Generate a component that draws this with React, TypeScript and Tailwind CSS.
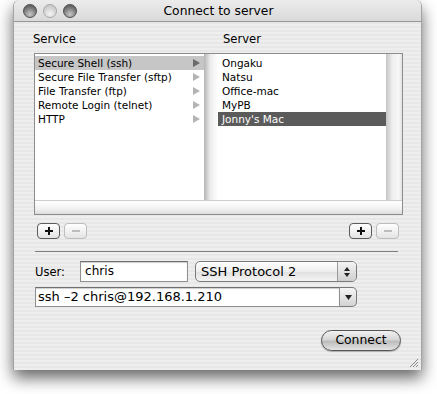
import React from 'react';

const services = [
  'Secure Shell (ssh)',
  'Secure File Transfer (sftp)',
  'File Transfer (ftp)',
  'Remote Login (telnet)',
  'HTTP',
];

const servers = ['Ongaku', 'Natsu', 'Office-mac', 'MyPB', "Jonny's Mac"];

const Arrow = ({ dark }: { dark?: boolean }) => (
  <svg width="7" height="8" viewBox="0 0 7 8">
    <path d="M0 0 L7 4 L0 8 Z" fill={dark ? '#6a6a6a' : '#b4b4b4'} />
  </svg>
);

const Light = ({ dim }: { dim?: boolean }) => (
  <div
    className={`h-[14px] w-[14px] rounded-full border ${
      dim
        ? 'border-[#a9a9a9] bg-[radial-gradient(circle_at_50%_75%,#f4f4f4,#c9c9c9_75%)]'
        : 'border-[#4e4e4e] bg-[radial-gradient(circle_at_50%_78%,#c8c8c8,#6a6a6a_70%,#555_100%)]'
    }`}
  />
);

const SmallButton = ({ kind, enabled }: { kind: 'plus' | 'minus'; enabled?: boolean }) => (
  <div
    className={`flex h-[16px] w-[23px] items-center justify-center rounded-[4px] border bg-[linear-gradient(to_bottom,#ffffff,#e4e4e4)] ${
      enabled ? 'border-[#5c5c5c]' : 'border-[#bdbdbd]'
    }`}
  >
    <svg width="10" height="10" viewBox="0 0 10 10">
      <path d="M1 5 H9" stroke={enabled ? '#111' : '#bcbcbc'} strokeWidth="2" />
      {kind === 'plus' && <path d="M5 1 V9" stroke="#111" strokeWidth="2" />}
    </svg>
  </div>
);

export default function App() {
  return (
    <div className="h-[394px] w-[437px] overflow-hidden bg-white pl-[13px] font-['DejaVu_Sans',sans-serif] text-black">
      {/* Window */}
      <div className="relative h-[370px] w-[409px] rounded-t-[6px] border-x border-[#a3a3a3] bg-[repeating-linear-gradient(180deg,#eeeeee_0px,#eeeeee_2px,#e7e7e7_2px,#e7e7e7_4px)] shadow-[0_8px_16px_rgba(0,0,0,0.6)]">
        {/* Title bar */}
        <div className="relative flex h-[22px] items-center gap-[6px] rounded-t-[6px] border-b border-[#979797] bg-[linear-gradient(to_bottom,#ececec,#d9d9d9)] pl-[9px]">
          <Light />
          <Light dim />
          <Light />
          <div className="absolute inset-0 flex items-center justify-center pl-[2px] text-[12.3px] leading-[22px]">
            Connect to server
          </div>
        </div>

        <div className="pl-[19px] pr-[19px]">
          {/* Column headers */}
          <div className="mt-[10px] flex h-[14px] text-[11.6px] leading-[14px]">
            <div className="w-[190px]">Service</div>
            <div>Server</div>
          </div>

          {/* Browser */}
          <div className="ml-[1px] mt-[7px] h-[162px] w-[369px] border border-[#8c8c8c] bg-white">
            <div className="flex h-[146px]">
              <div className="w-[169px] pt-[2px] text-[10.5px] leading-[14px]">
                {services.map((s, i) => (
                  <div
                    key={s}
                    className={`flex h-[14px] items-center justify-between pl-[3px] pr-[4px] ${
                      i === 0 ? 'bg-[#c6c6c6]' : ''
                    }`}
                  >
                    <span>{s}</span>
                    <Arrow dark={i === 0} />
                  </div>
                ))}
              </div>
              <div className="w-[14px] bg-[linear-gradient(to_right,#b5b5b5,#ececec_45%,#ffffff)]" />
              <div className="w-[168px] pt-[2px] text-[10.5px] leading-[14px]">
                {servers.map((s, i) => (
                  <div
                    key={s}
                    className={`h-[14px] pl-[4px] ${i === 4 ? 'bg-[#5b5b5b] text-white' : ''}`}
                  >
                    {s}
                  </div>
                ))}
              </div>
              <div className="w-[16px] bg-[linear-gradient(to_right,#c4c4c4,#efefef_40%,#f7f7f7_80%,#e2e2e2)]" />
            </div>
            <div className="h-[14px] border-t border-[#cdcdcd] bg-[linear-gradient(to_bottom,#ffffff,#f1f1f1_60%,#dcdcdc)]" />
          </div>

          {/* +/- buttons */}
          <div className="mt-[8px] flex h-[16px] justify-between pl-[4px] pr-[3px]">
            <div className="flex gap-[4px]">
              <SmallButton kind="plus" enabled />
              <SmallButton kind="minus" />
            </div>
            <div className="flex gap-[4px]">
              <SmallButton kind="plus" enabled />
              <SmallButton kind="minus" />
            </div>
          </div>

          {/* Separator */}
          <div className="ml-[2px] mr-[4px] mt-[12px] h-px bg-[#7e7e7e]" />

          {/* User row */}
          <div className="ml-[2px] mt-[8px] flex h-[23px] items-center">
            <div className="w-[45px] text-[11.5px] leading-[14px]">User:</div>
            <div className="flex h-[21px] w-[108px] items-center border border-[#8f8f8f] border-t-[#6f6f6f] bg-white pl-[4px] text-[12.1px] shadow-[inset_0_1px_1px_rgba(0,0,0,0.2)]">
              chris
            </div>
            <div className="ml-[7px] flex h-[21px] w-[162px] overflow-hidden rounded-[5px] border border-[#7a7a7a] bg-[linear-gradient(to_bottom,#ffffff,#eeeeee_50%,#e0e0e0_51%,#f4f4f4)] text-[13px] leading-[19px]">
              <div className="flex-1 pl-[5px]">SSH Protocol 2</div>
              <div className="flex w-[19px] flex-col items-center justify-center gap-[2px] border-l border-[#9a9a9a] bg-[linear-gradient(to_bottom,#f4f4f4,#cfcfcf)]">
                <svg width="6" height="4" viewBox="0 0 6 4">
                  <path d="M0 4 L3 0 L6 4 Z" fill="#222" />
                </svg>
                <svg width="6" height="4" viewBox="0 0 6 4">
                  <path d="M0 0 L6 0 L3 4 Z" fill="#222" />
                </svg>
              </div>
            </div>
          </div>

          {/* Combo box */}
          <div className="ml-[2px] mt-[4px] flex h-[20px] w-[322px]">
            <div className="flex flex-1 items-center border border-[#8f8f8f] border-t-[#6f6f6f] bg-white pl-[2px] text-[13px] shadow-[inset_0_1px_1px_rgba(0,0,0,0.2)]">
              ssh –2 chris@192.168.1.210
            </div>
            <div className="flex w-[17px] items-center justify-center rounded-r-[5px] border border-l-0 border-[#7a7a7a] bg-[linear-gradient(to_bottom,#f6f6f6,#d2d2d2)]">
              <svg width="7" height="5" viewBox="0 0 7 5">
                <path d="M0 0 L7 0 L3.5 5 Z" fill="#222" />
              </svg>
            </div>
          </div>

          {/* Connect */}
          <div className="mt-[23px] flex justify-end pr-[1px]">
            <div className="flex h-[21px] w-[80px] items-center justify-center rounded-full border border-[#555] bg-[linear-gradient(to_bottom,#f2f2f2_0%,#d6d6d6_45%,#bcbcbc_55%,#e4e4e4_100%)] text-[12.4px] shadow-[0_1px_1px_rgba(0,0,0,0.25)]">
              Connect
            </div>
          </div>
        </div>

        {/* Resize grip */}
        <svg className="absolute bottom-[2px] right-[2px]" width="11" height="11" viewBox="0 0 11 11">
          <path d="M10 2 L2 10 M10 5 L5 10 M10 8 L8 10" stroke="#8a8a8a" strokeWidth="1" />
        </svg>
      </div>
    </div>
  );
}
